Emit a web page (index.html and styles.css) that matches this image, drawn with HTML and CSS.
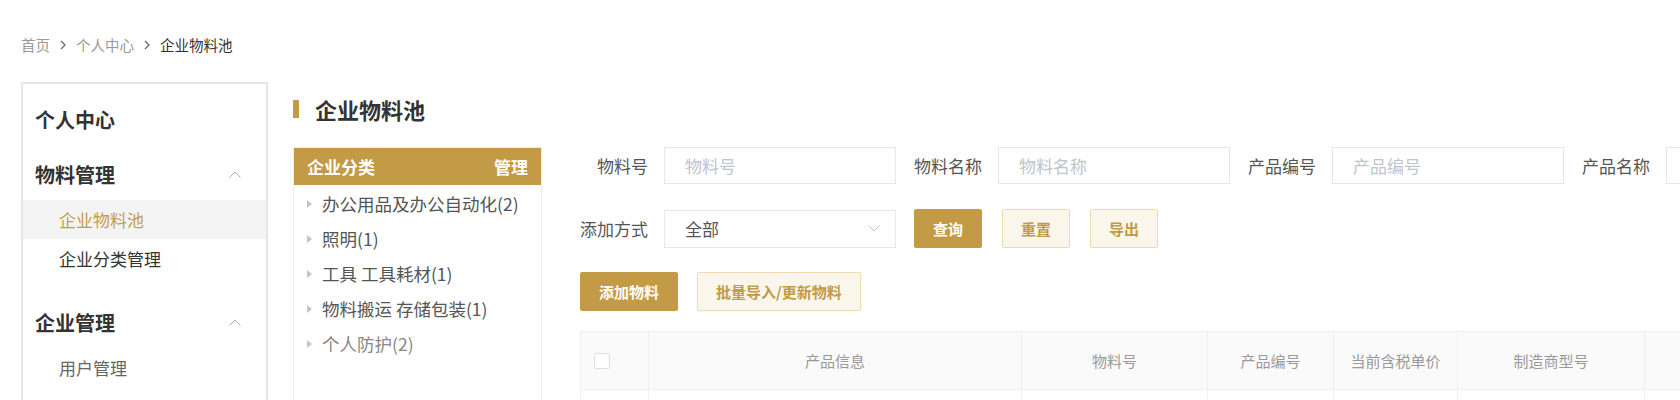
FILE: index.html
```html
<!DOCTYPE html>
<html lang="zh-CN">
<head>
    <meta charset="UTF-8">
    <meta name="viewport" content="width=device-width, initial-scale=1.0">
    <title>企业物料池</title>

    <link rel="stylesheet" href="styles.css">
</head>
<body>

    <div class="crumbs">
        <span class="crumb">首页</span>
        <svg class="crumb-sep" width="6" height="10" viewBox="0 0 6 10"><polyline points="1,1 5,5 1,9" fill="none" stroke="#666" stroke-width="1.2"/></svg>
        <span class="crumb">个人中心</span>
        <svg class="crumb-sep" width="6" height="10" viewBox="0 0 6 10"><polyline points="1,1 5,5 1,9" fill="none" stroke="#666" stroke-width="1.2"/></svg>
        <span class="crumb current">企业物料池</span>
    </div>

    <div class="layout">
        <aside class="sidebar">
            <div class="side-title">个人中心</div>

            <div class="group">
                <div class="group-head">
                    <span>物料管理</span>
                    <svg width="12" height="7" viewBox="0 0 12 7"><polyline points="0.5,6.5 6,1 11.5,6.5" fill="none" stroke="#aaa" stroke-width="1"/></svg>
                </div>
                <ul class="menu">
                    <li class="menu-item active">企业物料池</li>
                    <li class="menu-item">企业分类管理</li>
                </ul>
            </div>

            <div class="group">
                <div class="group-head">
                    <span>企业管理</span>
                    <svg width="12" height="7" viewBox="0 0 12 7"><polyline points="0.5,6.5 6,1 11.5,6.5" fill="none" stroke="#aaa" stroke-width="1"/></svg>
                </div>
                <ul class="menu">
                    <li class="menu-item muted">用户管理</li>
                </ul>
            </div>
        </aside>

        <main class="content">
            <h2 class="page-title">企业物料池</h2>

            <div class="workspace">
                <div class="category">
                    <div class="category-head">
                        <span>企业分类</span>
                        <span>管理</span>
                    </div>
                    <ul class="tree">
                        <li class="tree-node"><i class="caret"></i>办公用品及办公自动化(2)</li>
                        <li class="tree-node"><i class="caret"></i>照明(1)</li>
                        <li class="tree-node"><i class="caret"></i>工具 工具耗材(1)</li>
                        <li class="tree-node"><i class="caret"></i>物料搬运 存储包装(1)</li>
                        <li class="tree-node light"><i class="caret"></i>个人防护(2)</li>
                    </ul>
                </div>

                <div class="pool">
                    <div class="filter-row">
                        <div class="field">
                            <label class="field-label">物料号</label>
                            <input class="field-input" type="text" placeholder="物料号">
                        </div>
                        <div class="field">
                            <label class="field-label">物料名称</label>
                            <input class="field-input" type="text" placeholder="物料名称">
                        </div>
                        <div class="field">
                            <label class="field-label">产品编号</label>
                            <input class="field-input" type="text" placeholder="产品编号">
                        </div>
                        <div class="field">
                            <label class="field-label">产品名称</label>
                            <input class="field-input" type="text" placeholder="产品名称">
                        </div>
                    </div>

                    <div class="filter-row second">
                        <div class="field">
                            <label class="field-label">添加方式</label>
                            <div class="field-select">
                                <span>全部</span>
                                <svg width="12" height="7" viewBox="0 0 12 7"><polyline points="0.5,0.5 6,6 11.5,0.5" fill="none" stroke="#c0c4cc" stroke-width="1"/></svg>
                            </div>
                        </div>
                        <div class="btn-group">
                            <button class="btn primary" type="button">查询</button>
                            <button class="btn plain" type="button">重置</button>
                            <button class="btn plain" type="button">导出</button>
                        </div>
                    </div>

                    <div class="action-row">
                        <button class="btn primary" type="button">添加物料</button>
                        <button class="btn plain" type="button">批量导入/更新物料</button>
                    </div>

                    <table class="grid">
                        <colgroup>
                            <col style="width: 68px">
                            <col style="width: 373px">
                            <col style="width: 186px">
                            <col style="width: 126px">
                            <col style="width: 124px">
                            <col style="width: 187px">
                            <col style="width: 200px">
                        </colgroup>
                        <thead>
                            <tr>
                                <th><span class="check"></span></th>
                                <th>产品信息</th>
                                <th>物料号</th>
                                <th>产品编号</th>
                                <th>当前含税单价</th>
                                <th>制造商型号</th>
                                <th></th>
                            </tr>
                        </thead>
                        <tbody>
                            <tr>
                                <td></td>
                                <td></td>
                                <td></td>
                                <td></td>
                                <td></td>
                                <td></td>
                                <td></td>
                            </tr>
                        </tbody>
                    </table>
                </div>
            </div>
        </main>
    </div>

</body>
</html>
```

FILE: styles.css
```css
html, body {
    overflow: hidden;
}

body {
    margin: 0;
    background: #fff;
    color: #333;
    font-family: "Noto Sans CJK SC", "Noto Sans", sans-serif;
}

ul {
    list-style: none;
    margin: 0;
    padding: 0;
}

/* Breadcrumb */
.crumbs {
    display: flex;
    align-items: center;
    height: 20px;
    padding: 35px 0 0 21px;
    font-size: 14.5px;
    line-height: 20px;
}

.crumb {
    color: #999;
}

.crumb.current {
    color: #333;
}

.crumb-sep {
    margin: 0 10px;
}

/* Page layout */
.layout {
    display: flex;
    align-items: flex-start;
    width: 1900px;
    margin-top: 27px;
    padding-left: 21px;
}

/* Left menu */
.sidebar {
    flex-shrink: 0;
    box-sizing: border-box;
    width: 247px;
    min-height: 420px;
    border: 2px solid #e6e6e6;
}

.side-title {
    padding: 22px 0 0 12px;
    font-size: 20px;
    font-weight: bold;
    line-height: 28px;
    color: #333;
}

.group {
    margin-top: 20px;
}

.group + .group {
    margin-top: 24px;
}

.group-head {
    display: flex;
    align-items: center;
    justify-content: space-between;
    height: 40px;
    padding: 0 25px 0 12px;
    font-size: 20px;
    font-weight: bold;
    color: #333;
}

.menu {
    padding-top: 6px;
}

.menu-item {
    height: 39px;
    padding-left: 36px;
    font-size: 17px;
    line-height: 39px;
    color: #333;
}

.menu-item.active {
    background-color: #f4f4f4;
    color: #c59c48;
}

.menu-item.muted {
    color: #666;
}

/* Right content */
.content {
    flex: 1;
    margin-left: 25px;
    padding-top: 12px;
}

.page-title {
    display: flex;
    align-items: center;
    margin: 0;
    font-size: 22px;
    font-weight: bold;
    line-height: 30px;
    color: #333;
}

.page-title::before {
    content: "";
    width: 6px;
    height: 18px;
    margin-right: 16px;
    background-color: #c39a45;
}

.workspace {
    display: flex;
    align-items: flex-start;
    margin-top: 23px;
}

/* Category tree */
.category {
    flex-shrink: 0;
    box-sizing: border-box;
    width: 249px;
    min-height: 300px;
    border: 1px solid #ebebeb;
}

.category-head {
    display: flex;
    justify-content: space-between;
    align-items: center;
    height: 37px;
    padding: 0 13px;
    background-color: #c39a45;
    color: #fff;
    font-size: 17px;
    font-weight: bold;
}

.tree {
    padding-top: 1px;
}

.tree-node {
    display: flex;
    align-items: center;
    height: 35px;
    padding-left: 13px;
    font-size: 17.5px;
    color: #555;
}

.tree-node.light {
    color: #888;
}

.caret {
    width: 0;
    height: 0;
    margin-right: 10px;
    border-left: 5px solid #c0c4cc;
    border-top: 4px solid transparent;
    border-bottom: 4px solid transparent;
}

/* Filters and list */
.pool {
    flex-shrink: 0;
    margin-left: 38px;
}

.filter-row {
    display: flex;
    align-items: center;
}

.filter-row.second {
    margin-top: 25px;
}

.field {
    display: flex;
    align-items: center;
    flex-shrink: 0;
    margin-right: 18px;
}

.field-label {
    width: 68px;
    margin-right: 16px;
    text-align: right;
    font-size: 17px;
    color: #555;
    white-space: nowrap;
}

.field-input,
.field-select {
    box-sizing: border-box;
    width: 232px;
    height: 37px;
    padding: 0 20px;
    border: 1px solid #e4e7ed;
    border-radius: 0;
    font-family: inherit;
    font-size: 17px;
    color: #555;
    outline: none;
}

.field-input::placeholder {
    color: #c0c4cc;
}

.field-select {
    display: flex;
    align-items: center;
    justify-content: space-between;
    height: 38px;
    padding-right: 15px;
}

.btn-group {
    display: flex;
    gap: 20px;
}

.btn {
    box-sizing: border-box;
    height: 39px;
    padding: 0 18px;
    border-radius: 2px;
    font-family: inherit;
    font-size: 15px;
    font-weight: bold;
    cursor: pointer;
    white-space: nowrap;
}

.btn.primary {
    background-color: #c39a45;
    border: 1px solid #c39a45;
    color: #fff;
}

.btn.plain {
    background-color: #fbf6ec;
    border: 1px solid #eedcb3;
    color: #c39a45;
}

.action-row {
    display: flex;
    gap: 19px;
    margin-top: 24px;
}

.grid {
    margin-top: 20px;
    border-collapse: collapse;
    table-layout: fixed;
    width: 1264px;
}

.grid th,
.grid td {
    border: 1px solid #f0f0f3;
    padding: 0;
}

.grid th {
    height: 57px;
    background-color: #fafafa;
    font-size: 15px;
    font-weight: normal;
    color: #999;
    text-align: center;
}

.grid td {
    height: 60px;
}

.check {
    display: block;
    width: 16px;
    height: 16px;
    margin-left: 13px;
    box-sizing: border-box;
    border: 1px solid #dcdfe6;
    border-radius: 2px;
    background-color: #fff;
}
```
